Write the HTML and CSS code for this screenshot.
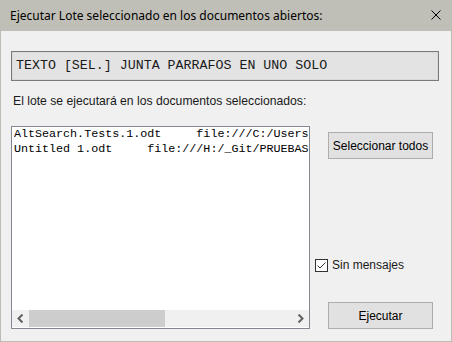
FILE: index.html
```html
<!DOCTYPE html>
<html lang="es">
<head>
    <meta charset="UTF-8">
    <title>Ejecutar Lote</title>
    <link rel="stylesheet" href="styles.css">
</head>
<body>
    <div class="window">
        <div class="titlebar">
            <span class="title">Ejecutar Lote seleccionado en los documentos abiertos:</span>
            <svg class="close" width="10" height="10" viewBox="0 0 10 10">
                <path d="M0.5 0.5 L9.5 9.5 M9.5 0.5 L0.5 9.5" stroke="#000" stroke-width="1" fill="none"/>
            </svg>
        </div>

        <div class="content">
            <div class="batch-name">TEXTO [SEL.] JUNTA PARRAFOS EN UNO SOLO</div>
            <p class="hint">El lote se ejecutará en los documentos seleccionados:</p>

            <div class="main-row">
                <div class="doc-list">
                    <div class="rows">
                        <div class="row">AltSearch.Tests.1.odt     file:///C:/Users</div>
                        <div class="row">Untitled 1.odt     file:///H:/_Git/PRUEBAS</div>
                    </div>
                    <!-- horizontal scrollbar -->
                    <div class="hscroll">
                        <span class="arrow">
                            <svg width="7" height="9" viewBox="0 0 7 9"><path d="M5.5 0.5 L1.5 4.5 L5.5 8.5" stroke="#606060" stroke-width="2" fill="none"/></svg>
                        </span>
                        <span class="track"><span class="thumb"></span></span>
                        <span class="arrow">
                            <svg width="7" height="9" viewBox="0 0 7 9"><path d="M1.5 0.5 L5.5 4.5 L1.5 8.5" stroke="#606060" stroke-width="2" fill="none"/></svg>
                        </span>
                    </div>
                </div>

                <div class="side">
                    <button class="btn btn-select">Seleccionar todos</button>
                    <label class="check">
                        <span class="box">
                            <svg width="11" height="11" viewBox="0 0 11 11"><path d="M1.5 5.5 L4 8 L9.5 2.5" stroke="#333" stroke-width="1" fill="none"/></svg>
                        </span>
                        Sin mensajes
                    </label>
                    <button class="btn btn-run">Ejecutar</button>
                </div>
            </div>
        </div>
    </div>
</body>
</html>
```

FILE: styles.css
```css
/* Reset */
body {
    margin: 0;
    padding: 0;
    background-color: #f0f0f0;
}

/* Dialog frame */
.window {
    width: 452px;
    height: 342px;
    box-sizing: border-box;
    border: 1px solid #bdbdb5;
    border-top: none;
    background-color: #f0f0f0;
    font-family: "Liberation Sans", Arial, sans-serif;
    font-size: 12px;
    color: #000;
}

.titlebar {
    height: 31px;
    margin: 0 -1px;
    background-color: #bfbfb7;
    display: flex;
    align-items: center;
    justify-content: space-between;
    padding: 0 11px 0 10px;
}

.title {
    font-family: "Noto Sans", sans-serif;
    font-size: 12px;
    line-height: 16px;
}

.close {
    display: block;
    margin-top: -1px;
}

.content {
    padding: 20px 12px 0 10px;
}

/* Batch name box */
.batch-name {
    height: 30px;
    box-sizing: border-box;
    border: 1px solid #7a7a7a;
    box-shadow: inset 0 0 0 1px #d9d9d9;
    background-color: #e3e3e3;
    font-family: "Liberation Mono", "Courier New", monospace;
    font-size: 13.3px;
    line-height: 28px;
    padding-left: 4px;
    color: #1a1a1a;
}

.hint {
    margin: 13px 0 0 2px;
    font-size: 12.2px;
    line-height: 15px;
    color: #1a1a1a;
}

.main-row {
    display: flex;
    margin-top: 17px;
}

/* Document list */
.doc-list {
    width: 299px;
    height: 203px;
    box-sizing: border-box;
    border: 1px solid #828790;
    background-color: #fff;
    display: flex;
    flex-direction: column;
}

.rows {
    flex: 1;
    overflow: hidden;
    padding: 0 0 0 2px;
}

.row {
    font-family: "Liberation Mono", "Courier New", monospace;
    font-size: 11.7px;
    line-height: 15px;
    white-space: pre;
    overflow: hidden;
    color: #000;
}

.hscroll {
    height: 17px;
    display: flex;
    background-color: #f0f0f0;
    margin-bottom: 1px;
}

.arrow {
    width: 17px;
    display: flex;
    align-items: center;
    justify-content: center;
}

.track {
    flex: 1;
}

.thumb {
    display: block;
    width: 136px;
    height: 100%;
    background-color: #cdcdcd;
}

/* Right column */
.side {
    display: flex;
    flex-direction: column;
    align-items: flex-start;
    margin-left: 5px;
}

.btn {
    width: 105px;
    height: 27px;
    margin-left: 13px;
    border: 1px solid #adadad;
    background-color: #e1e1e1;
    font-family: "Liberation Sans", Arial, sans-serif;
    font-size: 12px;
    color: #000;
    padding: 0;
}

.btn-select {
    margin-top: 6px;
}

.check {
    display: flex;
    align-items: center;
    margin-top: 100px;
    line-height: 13px;
    color: #1a1a1a;
}

.box {
    width: 13px;
    height: 13px;
    box-sizing: border-box;
    border: 1px solid #333;
    background-color: #fff;
    margin-right: 4px;
    display: flex;
}

.btn-run {
    margin-top: auto;
}
```
